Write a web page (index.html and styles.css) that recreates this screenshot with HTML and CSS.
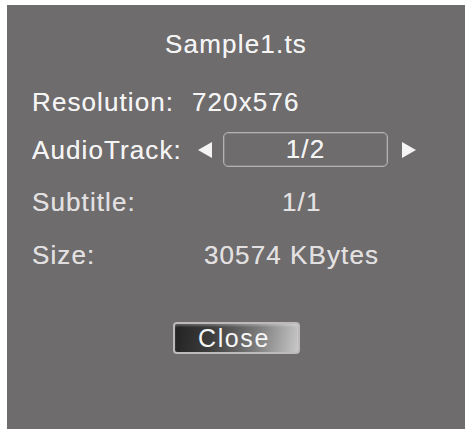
FILE: index.html
```html
<!DOCTYPE html>
<html lang="en">
<head>
  <meta charset="UTF-8">
  <title>File Info</title>
  <link rel="stylesheet" href="styles.css">
</head>
<body>

  <div class="info-box">
    <div class="title">Sample1.ts</div>

    <div class="row row-res">
      <span class="label">Resolution:</span>
      <span class="value">720x576</span>
    </div>

    <div class="row row-audio">
      <span class="label">AudioTrack:</span>
      <div class="picker">
        <svg class="arrow" width="14" height="16" viewBox="0 0 14 16"><polygon points="14,0 14,16 0,8" fill="#f4f4f4"/></svg>
        <div class="picker-box">1/2</div>
        <svg class="arrow" width="14" height="16" viewBox="0 0 14 16"><polygon points="0,0 0,16 14,8" fill="#f4f4f4"/></svg>
      </div>
    </div>

    <div class="row row-sub dim">
      <span class="label">Subtitle:</span>
      <span class="value val-sub">1/1</span>
    </div>

    <div class="row row-size dim">
      <span class="label">Size:</span>
      <span class="value val-size">30574 KBytes</span>
    </div>

    <div class="actions">
      <button class="btn-close">Close</button>
    </div>
  </div>

</body>
</html>
```

FILE: styles.css
```css
body {
  margin: 0;
  background-color: #ffffff;
  font-family: 'Liberation Sans', Arial, sans-serif;
}
.info-box {
  margin: 5px 0 0 7px;
  width: 458px;
  height: 430px;
  background-color: #6f6c6d;
  color: #f4f4f4;
  font-size: 26px;
  letter-spacing: 1.1px;
  line-height: 30px;
  padding: 24px 0 0 25px;
  box-sizing: border-box;
  text-shadow: 0 0 0.6px rgba(255, 255, 255, 0.6);
}
.title {
  text-align: center;
  margin-left: -25px;
  letter-spacing: 1.2px;
}
.row {
  display: flex;
  align-items: center;
}
.label {
  width: 160px;
  flex-shrink: 0;
}
.row-res { margin-top: 28px; }
.row-audio { margin-top: 15px; height: 35px; }
.row-sub { margin-top: 20px; }
.row-size { margin-top: 23px; }
.dim { color: #e2e0e1; }
.val-sub { margin-left: 90px; }
.val-size { margin-left: 12px; }
.picker {
  display: flex;
  align-items: center;
  margin-left: 6px;
}
.picker-box {
  width: 165px;
  height: 35px;
  box-sizing: border-box;
  margin: 0 14px 0 11px;
  border: 1px solid #b3b1b2;
  border-radius: 5px;
  box-shadow: inset 0 0 0 1px #858283;
  text-align: center;
  line-height: 33px;
}
.actions {
  margin: 52px 0 0 -25px;
  display: flex;
  justify-content: center;
}
.btn-close {
  width: 127px;
  height: 32px;
  padding: 0 4px 0 0;
  border: 2px solid #bcbaba;
  border-radius: 4px;
  background: linear-gradient(100deg, #232222 0%, #3e3d3d 30%, #7a7979 65%, #c9c8c8 100%);
  box-shadow: inset 0 2px 2px rgba(255, 255, 255, 0.25);
  color: #f6f6f6;
  font-family: 'Liberation Sans', Arial, sans-serif;
  font-size: 25px;
  letter-spacing: 1.6px;
  line-height: 28px;
}
```
